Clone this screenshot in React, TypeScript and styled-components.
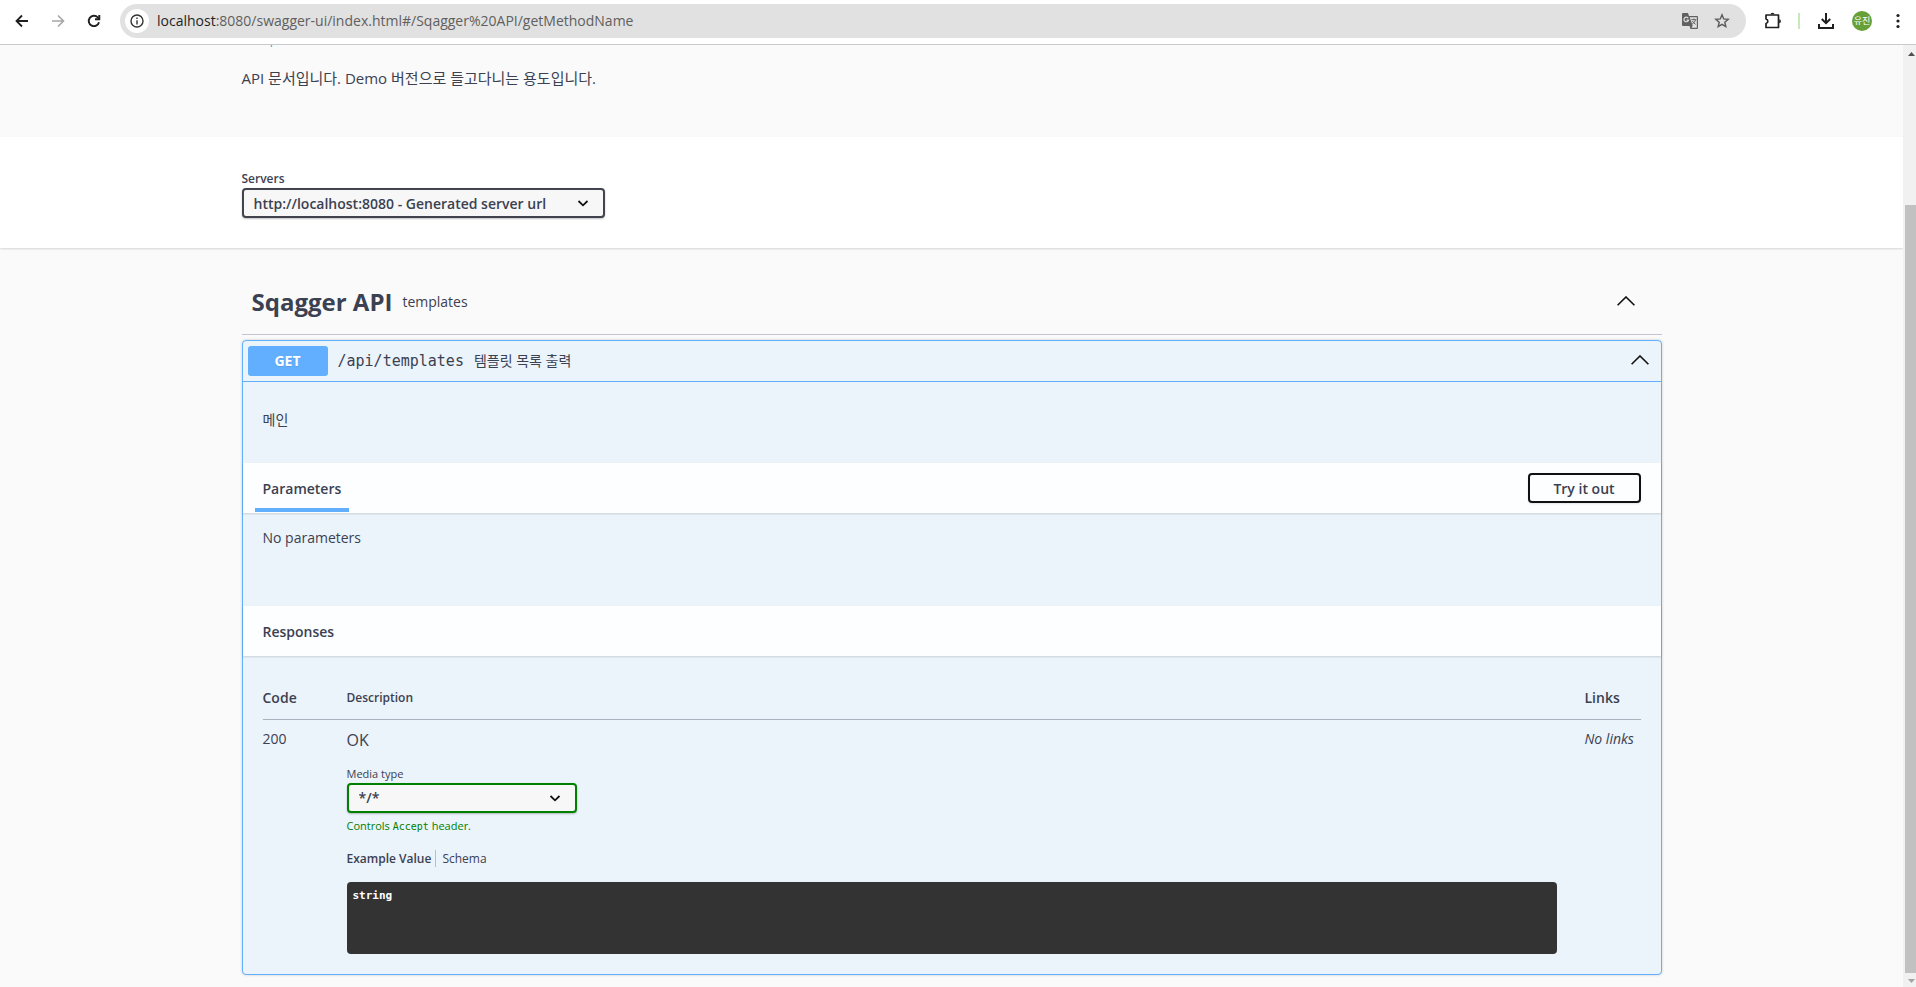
import React from "react";
import styled, { createGlobalStyle, css } from "styled-components";

const sans = `"Open Sans", "Noto Sans CJK KR", sans-serif`;
const mono = `"DejaVu Sans Mono", "Noto Sans CJK KR", monospace`;

const GlobalStyle = createGlobalStyle`
  *, *::before, *::after { box-sizing: border-box; }
  body { margin: 0; font-family: ${sans}; color: #3b4151; background: #fafafa; }
  h3, h4, p, pre { margin: 0; }
  button, select, input { font-family: inherit; color: inherit; }
`;

const Window = styled.div`
  display: flex;
  flex-direction: column;
  height: 100vh;
  overflow: hidden;
`;

const Toolbar = styled.header`
  display: flex;
  align-items: center;
  flex: none;
  height: 45px;
  padding: 0 8px 2px 4px;
  background: #fff;
  border-bottom: 1px solid #c9cacb;
`;

const IconButton = styled.button<{ $width: number; $dim?: boolean }>`
  display: flex;
  align-items: center;
  justify-content: center;
  flex: none;
  width: ${(p) => p.$width}px;
  height: 32px;
  padding: 0;
  border: 0;
  background: none;
  color: ${(p) => (p.$dim ? "#a6a6a6" : "#1f1f1f")};
`;

const Omnibox = styled.div`
  display: flex;
  align-items: center;
  flex: 1;
  min-width: 0;
  height: 34px;
  margin: 0 10px 0 8px;
  padding: 0 8px 0 5px;
  border-radius: 17px;
  background: #e1e1e1;
  color: #5a5a5a;
`;

const SiteInfo = styled.button`
  display: flex;
  align-items: center;
  justify-content: center;
  width: 24px;
  height: 24px;
  padding: 0;
  border: 0;
  border-radius: 50%;
  background: #fff;
`;

const Address = styled.div`
  flex: 1;
  margin-left: 8px;
  overflow: hidden;
  white-space: nowrap;
  font-size: 14px;
  line-height: 20px;
  color: #5f5f5f;

  span { color: #1f1f1f; }
`;

const Divider = styled.span`
  width: 2px;
  height: 16px;
  margin: 0 9px 0 8px;
  background: #c8e8bd;
`;

const Avatar = styled.button`
  width: 20px;
  height: 20px;
  margin: 0 16px 0 9px;
  padding: 0;
  border: 0;
  border-radius: 50%;
  background: #67a037;
  && { color: #fff; }
  font-size: 9px;
  line-height: 20px;
`;

const Viewport = styled.div`
  display: flex;
  flex: 1;
  min-height: 0;
`;

const Page = styled.main`
  flex: 1;
  min-width: 0;
  overflow: hidden;
`;

const Scrollbar = styled.div`
  display: flex;
  flex-direction: column;
  align-items: flex-end;
  flex: none;
  width: 13px;
  padding: 7px 0 4px;
  background: #f1f1f1;
`;

const Thumb = styled.div`
  flex: 1;
  width: 11px;
  margin: 149px 0 6px;
  background: #c1c1c1;
`;

const Wrapper = styled.div`
  max-width: 1460px;
  margin: 0 auto;
  padding: 0 20px;
`;

const Info = styled.section`
  display: flow-root;
  height: 92px;
`;

const DocsLink = styled.a`
  display: block;
  margin-top: -13px;
  font-size: 12px;
  line-height: 16px;
  color: #4990e2;
  text-decoration: none;
`;

const Description = styled.p`
  padding-top: 20px;
  font-size: 15px;
  line-height: 20px;
`;

const Scheme = styled.section`
  height: 111px;
  padding-top: 33px;
  background: #fff;
  box-shadow: 0 1px 2px rgba(0, 0, 0, 0.15);
`;

const FieldLabel = styled.label<{ $bold?: boolean }>`
  display: block;
  font-size: ${(p) => (p.$bold ? 12 : 11)}px;
  line-height: 18px;
  font-weight: ${(p) => (p.$bold ? 600 : 400)};
`;

const SelectBox = styled.span<{ $width: number }>`
  position: relative;
  display: block;
  width: ${(p) => p.$width}px;
  max-width: 100%;

  svg {
    position: absolute;
    top: 8px;
    right: 15px;
    pointer-events: none;
  }
`;

const Select = styled.select<{ $accent?: boolean }>`
  display: block;
  appearance: none;
  width: 100%;
  height: 30px;
  padding: 0 40px 0 10px;
  border: 2px solid ${(p) => (p.$accent ? "green" : "#41444e")};
  border-radius: 4px;
  background: #f7f7f7;
  box-shadow: 0 1px 2px rgba(0, 0, 0, 0.25);
  font-size: 14px;
  font-weight: 600;
`;

const TagHeader = styled.div`
  display: flex;
  align-items: center;
  height: 66px;
  margin-top: 21px;
  padding: 0 24px 0 10px;
  border-bottom: 1px solid #c4c6cb;
`;

const TagName = styled.h3`
  font-size: 24px;
  line-height: 32px;
  font-weight: 700;
`;

const TagText = styled.p`
  flex: 1;
  padding-left: 10px;
  font-size: 14px;
  line-height: 20px;
`;

const PlainButton = styled.button`
  display: flex;
  align-items: center;
  justify-content: center;
  width: 24px;
  height: 24px;
  padding: 0 0 2px;
  border: 0;
  background: none;
`;

const Operation = styled.section`
  margin-top: 5px;
  border: 1px solid #61affe;
  border-radius: 4px;
  background: #ebf3fb;
  box-shadow: 0 0 3px rgba(0, 0, 0, 0.19);
`;

const Summary = styled.div`
  display: flex;
  align-items: center;
  height: 41px;
  padding: 0 9px 0 5px;
  border-bottom: 1px solid #61affe;
`;

const Method = styled.span`
  width: 80px;
  border-radius: 3px;
  background: #61affe;
  color: #fff;
  font-size: 14px;
  line-height: 30px;
  font-weight: 700;
  text-align: center;
  text-shadow: 0 1px 0 rgba(0, 0, 0, 0.1);
`;

const Path = styled.span`
  padding: 0 10px;
  font-family: ${mono};
  font-size: 15px;
  line-height: 20px;
`;

const SummaryText = styled.span`
  flex: 1;
  font-size: 14px;
  line-height: 20px;
`;

const BodyText = styled.p<{ $height: number; $top: number }>`
  height: ${(p) => p.$height}px;
  padding: ${(p) => p.$top}px 20px 0;
  font-size: 14px;
  line-height: 20px;
`;

const SectionHeader = styled.div`
  display: flex;
  align-items: center;
  justify-content: space-between;
  height: 50px;
  padding: 0 20px 0 12px;
  background: rgba(255, 255, 255, 0.85);
  box-shadow: 0 1px 2px rgba(0, 0, 0, 0.15);
`;

const SectionTitle = styled.h4<{ $active?: boolean }>`
  align-self: flex-end;
  height: 34px;
  padding: 0 8px;
  font-size: 14px;
  line-height: 20px;
  font-weight: 600;
  ${(p) =>
    p.$active &&
    css`
      margin-bottom: 1px;
      height: 33px;
      border-bottom: 4px solid #61affe;
    `}
`;

const TryButton = styled.button`
  width: 113px;
  height: 30px;
  border: 2px solid #111;
  border-radius: 4px;
  background: transparent;
  box-shadow: 0 1px 2px rgba(0, 0, 0, 0.1);
  font-size: 14px;
  font-weight: 600;
`;

const Responses = styled.div`
  padding: 20px;
`;

const Table = styled.table`
  width: 100%;
  border-collapse: collapse;
  table-layout: fixed;
  font-size: 14px;
  line-height: 20px;
`;

const Head = styled.th<{ $width?: number; $small?: boolean }>`
  width: ${(p) => (p.$width ? `${p.$width}px` : "auto")};
  height: 43px;
  padding: 12px 0 10px;
  border-bottom: 1px solid #a9b2be;
  font-size: ${(p) => (p.$small ? 12 : 14)}px;
  font-weight: 600;
  text-align: left;
  vertical-align: top;
`;

const Cell = styled.td`
  padding: 9px 0 0;
  vertical-align: top;
  white-space: nowrap;
`;

const DescriptionCell = styled(Cell)`
  padding-right: 28px;
`;

const Status = styled.p`
  margin-bottom: 14px;
  font-size: 16px;
  line-height: 22px;
`;

const AcceptNote = styled.p`
  margin-top: 4px;
  color: green;
  font-size: 11px;
  line-height: 18px;

  code { font-family: ${mono}; font-size: 10px; }
`;

const Tabs = styled.div`
  display: flex;
  margin: 14px 0 15px;
`;

const Tab = styled.button<{ $active?: boolean }>`
  padding: 0;
  border: 0;
  background: none;
  font-size: 12px;
  line-height: 17px;
  font-weight: ${(p) => (p.$active ? 600 : 400)};

  & + & {
    margin-left: 4px;
    padding-left: 6px;
    border-left: 1px solid #b9bfc7;
  }
`;

const Example = styled.pre`
  height: 72px;
  padding: 6px;
  border-radius: 4px;
  background: #333;
  color: #fff;
  font-family: ${mono};
  font-size: 11px;
  line-height: 16px;
  font-weight: 700;
`;

const Links = styled.i`
  font-size: 14px;
`;

const ChevronUp = () => (
  <svg width="18" height="10" viewBox="0 0 18 10" fill="none" stroke="#111" strokeWidth="1.6">
    <path d="M.6 9.3 9 1l8.400 8.300" />
  </svg>
);

const SelectArrow = () => (
  <svg width="14" height="14" viewBox="0 0 14 14" fill="none" stroke="#111" strokeWidth="1.8">
    <path d="M2.500 5 7 9.300 11.500 5" />
  </svg>
);

const BackIcon = () => (
  <svg width="14" height="14" viewBox="0 0 14 14" fill="none" stroke="currentColor" strokeWidth="1.8">
    <path d="M13 7H2.200M7 1.500 1.500 7 7 12.500" />
  </svg>
);

const ForwardIcon = () => (
  <svg width="14" height="14" viewBox="0 0 14 14" fill="none" stroke="currentColor" strokeWidth="1.600">
    <path d="M1 7h10.800M7 1.500 12.500 7 7 12.500" />
  </svg>
);

const ReloadIcon = () => (
  <svg width="14" height="14" viewBox="0 0 14 14" fill="none" stroke="currentColor" strokeWidth="1.900">
    <path d="M12 8.200A5.200 5.200 0 1 1 10.800 3.400L12 4.600" />
    <path d="M12.300 1v4.300H8" />
  </svg>
);

const InfoIcon = () => (
  <svg width="14" height="14" viewBox="0 0 14 14" fill="none" stroke="#333" strokeWidth="1.400">
    <circle cx="7" cy="7" r="6" />
    <path d="M7 6.200v4.200M7 3.500v1.500" />
  </svg>
);

const TranslateIcon = () => (
  <svg width="18" height="18" viewBox="0 0 18 18">
    <path d="M2 1h5l1 3h8a1 1 0 0 1 1 1v11a1 1 0 0 1-1 1H9.500l-1-3H2a1 1 0 0 1-1-1V2a1 1 0 0 1 1-1z" fill="#616161" />
    <path d="M8.700 5.200h7.100v10.600h-5.300l1.200-2z" fill="#e1e1e1" />
    <path d="M7.200 6.200A2.300 2.300 0 1 0 7.500 8H5.400" fill="none" stroke="#e1e1e1" strokeWidth="1.200" />
    <path d="M10.300 7.700h5M12.800 6.500v1.200M14.500 7.700c-.4 1.800-1.800 3.400-3.300 4.300M11.400 9c.7 1.500 1.800 2.600 3.200 3.300" fill="none" stroke="#616161" />
  </svg>
);

const StarIcon = () => (
  <svg width="16" height="16" viewBox="0 0 16 16" fill="none" stroke="#5a5a5a" strokeWidth="1.400">
    <path d="m8 1.800 1.700 4.100 4.500.4-3.400 2.900 1 4.400L8 11.300l-3.800 2.300 1-4.400-3.400-2.900 4.500-.4z" />
  </svg>
);

const PuzzleIcon = () => (
  <svg width="18" height="18" viewBox="0 0 18 18" fill="none" stroke="#1f1f1f" strokeWidth="1.700" strokeLinejoin="round">
    <path d="M2 3h12.500v12.500H2v-4a2.300 2.300 0 0 0 0-4.500z" />
    <path d="M6.500 2.300a2 1.500 0 0 1 4 0zM15.200 7.300a1.700 2 0 0 1 0 4z" fill="#1f1f1f" stroke="none" />
  </svg>
);

const DownloadIcon = () => (
  <svg width="18" height="18" viewBox="0 0 18 18" fill="none" stroke="#1f1f1f" strokeWidth="2">
    <path d="M9 1v10M4.800 7 9 11.200 13.200 7M2 12v4h14v-4" />
  </svg>
);

const MenuIcon = () => (
  <svg width="4" height="16" viewBox="0 0 4 16" fill="#1f1f1f">
    <circle cx="2" cy="2.500" r="1.600" />
    <circle cx="2" cy="8" r="1.600" />
    <circle cx="2" cy="13.500" r="1.600" />
  </svg>
);

const ScrollArrow = ({ down }: { down?: boolean }) => (
  <svg width="9" height="4" viewBox="0 0 9 4" fill={down ? "#a3a3a3" : "#505050"}>
    <path d={down ? "M1 0h7L4.500 4z" : "M1 4h7L4.500 0z"} />
  </svg>
);

export default function App() {
  return (
    <Window>
      <GlobalStyle />
      <Toolbar>
        <IconButton $width={36} aria-label="Back"><BackIcon /></IconButton>
        <IconButton $width={36} $dim aria-label="Forward"><ForwardIcon /></IconButton>
        <IconButton $width={36} aria-label="Reload"><ReloadIcon /></IconButton>
        <Omnibox>
          <SiteInfo aria-label="Site information"><InfoIcon /></SiteInfo>
          <Address><span>localhost</span>:8080/swagger-ui/index.html#/Sqagger%20API/getMethodName</Address>
          <IconButton $width={32} aria-label="Translate"><TranslateIcon /></IconButton>
          <IconButton $width={32} aria-label="Bookmark"><StarIcon /></IconButton>
        </Omnibox>
        <IconButton $width={34} aria-label="Extensions"><PuzzleIcon /></IconButton>
        <Divider />
        <IconButton $width={34} aria-label="Downloads"><DownloadIcon /></IconButton>
        <Avatar>유진</Avatar>
        <IconButton $width={20} aria-label="Menu"><MenuIcon /></IconButton>
      </Toolbar>
      <Viewport>
        <Page>
          <Info>
            <Wrapper>
              <DocsLink href="#docs">/v3/api-docs</DocsLink>
              <Description>API 문서입니다. Demo 버전으로 들고다니는 용도입니다.</Description>
            </Wrapper>
          </Info>
          <Scheme>
            <Wrapper>
              <FieldLabel $bold htmlFor="servers">Servers</FieldLabel>
              <SelectBox $width={363}>
                <Select id="servers">
                  <option>http://localhost:8080 - Generated server url</option>
                </Select>
                <SelectArrow />
              </SelectBox>
            </Wrapper>
          </Scheme>
          <Wrapper>
            <TagHeader>
              <TagName>Sqagger API</TagName>
              <TagText>templates</TagText>
              <PlainButton aria-label="Collapse tag"><ChevronUp /></PlainButton>
            </TagHeader>
            <Operation>
              <Summary>
                <Method>GET</Method>
                <Path>/api/templates</Path>
                <SummaryText>템플릿 목록 출력</SummaryText>
                <PlainButton aria-label="Collapse operation"><ChevronUp /></PlainButton>
              </Summary>
              <BodyText $height={81} $top={28}>메인</BodyText>
              <SectionHeader>
                <SectionTitle $active>Parameters</SectionTitle>
                <TryButton>Try it out</TryButton>
              </SectionHeader>
              <BodyText $height={93} $top={15}>No parameters</BodyText>
              <SectionHeader>
                <SectionTitle>Responses</SectionTitle>
              </SectionHeader>
              <Responses>
                <Table>
                  <thead>
                    <tr>
                      <Head $width={84}>Code</Head>
                      <Head $small>Description</Head>
                      <Head $width={56}>Links</Head>
                    </tr>
                  </thead>
                  <tbody>
                    <tr>
                      <Cell>200</Cell>
                      <DescriptionCell>
                        <Status>OK</Status>
                        <FieldLabel htmlFor="media">Media type</FieldLabel>
                        <SelectBox $width={230}>
                          <Select id="media" $accent>
                            <option>*/*</option>
                          </Select>
                          <SelectArrow />
                        </SelectBox>
                        <AcceptNote>Controls <code>Accept</code> header.</AcceptNote>
                        <Tabs>
                          <Tab $active>Example Value</Tab>
                          <Tab>Schema</Tab>
                        </Tabs>
                        <Example>string</Example>
                      </DescriptionCell>
                      <Cell><Links>No links</Links></Cell>
                    </tr>
                  </tbody>
                </Table>
              </Responses>
            </Operation>
          </Wrapper>
        </Page>
        <Scrollbar>
          <ScrollArrow />
          <Thumb />
          <ScrollArrow down />
        </Scrollbar>
      </Viewport>
    </Window>
  );
}
